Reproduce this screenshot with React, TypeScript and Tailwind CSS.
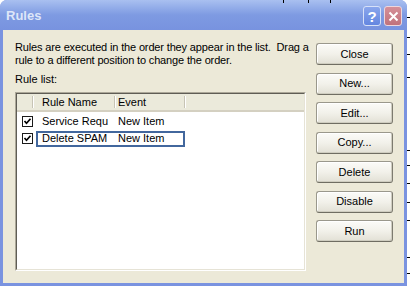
import React from "react";

const font = { fontFamily: '"Liberation Sans", Arial, sans-serif' };

function XPButton({ label }: { label: string }) {
  return (
    <div className="w-[77px] h-[22px] rounded-[3px] border border-[#9a988c] border-b-[#6f6d62] border-r-[#7d7b70] bg-gradient-to-b from-[#fbfbf8] via-[#f2f1ea] to-[#e2e0d5] flex items-center justify-center text-[11px] text-black shadow-[inset_-1px_-1px_0_#cfcdc0,inset_1px_1px_0_#ffffff]">
      {label}
    </div>
  );
}

function CheckBox() {
  return (
    <div className="w-[11px] h-[11px] border border-[#1a1a1a] bg-white flex items-center justify-center">
      <svg width="9" height="9" viewBox="0 0 9 9">
        <path d="M1.5 4 L3.5 6.2 L7.5 1.8" stroke="#000" strokeWidth="1.7" fill="none" />
      </svg>
    </div>
  );
}

function Sep() {
  return <div className="absolute right-0 top-[2px] bottom-[2px] w-[2px] border-l border-[#c7c4b5] border-r border-r-white" />;
}

export default function App() {
  const marks = [17, 37, 54, 77, 150, 165, 183, 202, 220, 257, 273];
  return (
    <div className="w-[410px] h-[288px] bg-white relative overflow-hidden" style={font}>
      {marks.map((y) => (
        <div key={y} className="absolute left-[407px] w-[3px] h-[1px] bg-black" style={{ top: y }} />
      ))}
      <div className="absolute left-[283px] top-0 w-[1px] h-[3px] bg-black" />
      <div className="absolute left-[308px] top-0 w-[1px] h-[3px] bg-black" />
      <div className="absolute left-[330px] top-0 w-[1px] h-[3px] bg-black" />

      <div className="w-[407px] h-[286px] flex flex-col rounded-t-[7px] overflow-hidden bg-[#7a93e0]">
        {/* Title bar */}
        <div className="h-[30px] flex items-center bg-gradient-to-b from-[#a9c0f0] via-[#7e9ae2] to-[#7893df] pl-[6px] pr-[5px]">
          <div className="text-[13px] font-bold text-[#dde6f8] flex-1 mt-[2px]">Rules</div>
          <div className="flex gap-[3px] mt-[2px]">
            <div className="w-[18px] h-[20px] rounded-[3px] border border-[#d7e1f8] bg-gradient-to-b from-[#8aa6ec] to-[#6486e0] flex items-center justify-center text-white font-bold text-[15px] leading-none">
              ?
            </div>
            <div className="w-[18px] h-[20px] rounded-[3px] border border-[#ecd6dc] bg-gradient-to-b from-[#d58f98] to-[#c0727c] flex items-center justify-center">
              <svg width="11" height="11" viewBox="0 0 11 11">
                <path d="M1.5 1.5 L9.5 9.5 M9.5 1.5 L1.5 9.5" stroke="#fff" strokeWidth="2" />
              </svg>
            </div>
          </div>
        </div>
        {/* Client area */}
        <div className="flex-1 mx-[3px] mb-[3px] bg-[#ece9d8] flex pl-[11px] pt-[11px]">
          <div className="w-[292px] flex flex-col">
            <div className="text-[11px] leading-[13px] text-black pl-[1px] tracking-[-0.15px]">
              <div className="whitespace-pre">Rules are executed in the order they appear in the list.  Drag a</div>
              <div>rule to a different position to change the order.</div>
            </div>
            <div className="text-[11px] leading-[13px] text-black mt-[6px] pl-[1px]">Rule list:</div>
            <div className="mt-[6px] ml-[1px] w-[291px] h-[179px] border border-[#aca899] border-b-white border-r-white">
              <div className="w-full h-full border border-[#5f5d55] border-b-[#e6e3d6] border-r-[#e6e3d6] bg-white flex flex-col">
                {/* header */}
                <div className="h-[18px] flex bg-[#ebeadb] border-b-2 border-[#d4d0c1] text-[11px] text-black">
                  <div className="w-[17px] relative">
                    <Sep />
                  </div>
                  <div className="w-[82px] relative flex items-center pl-[8px]">
                    Rule Name
                    <Sep />
                  </div>
                  <div className="w-[70px] relative flex items-center pl-[2px]">
                    Event
                    <Sep />
                  </div>
                  <div className="flex-1" />
                </div>
                {/* rows */}
                <div className="flex flex-col pt-[1px] text-[11px] text-black">
                  <div className="h-[17px] flex items-center">
                    <div className="w-[17px] pl-[5px]">
                      <CheckBox />
                    </div>
                    <div className="w-[82px] pl-[8px] pr-[9px] overflow-hidden whitespace-nowrap">Service Requ</div>
                    <div className="pl-[2px]">New Item</div>
                  </div>
                  <div className="h-[17px] flex items-center">
                    <div className="w-[17px] pl-[5px]">
                      <CheckBox />
                    </div>
                    <div className="ml-[2px] w-[149px] h-[16px] border-2 border-[#42679d] flex items-center">
                      <div className="w-[78px] pl-[4px] overflow-hidden whitespace-nowrap">Delete SPAM</div>
                      <div className="pl-[2px]">New Item</div>
                    </div>
                  </div>
                </div>
              </div>
            </div>
          </div>
          <div className="ml-[10px] pt-[2px] flex flex-col gap-[7.5px]">
            <XPButton label="Close" />
            <XPButton label="New..." />
            <XPButton label="Edit..." />
            <XPButton label="Copy..." />
            <XPButton label="Delete" />
            <XPButton label="Disable" />
            <XPButton label="Run" />
          </div>
        </div>
      </div>
    </div>
  );
}
